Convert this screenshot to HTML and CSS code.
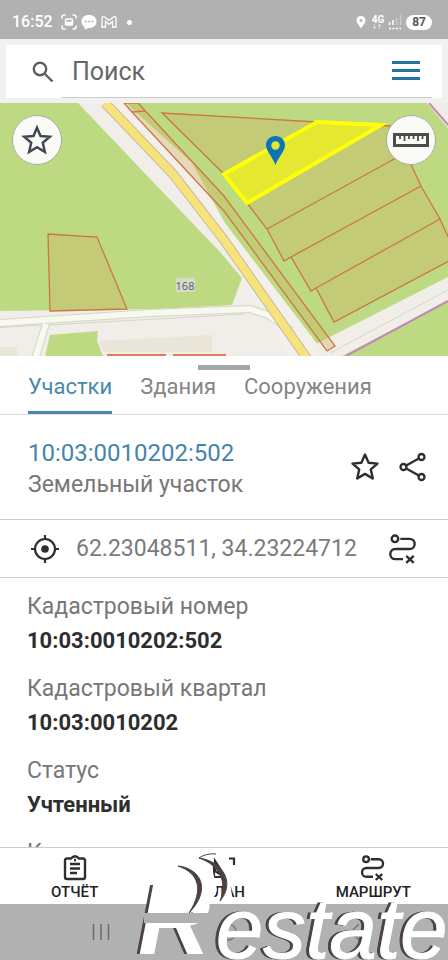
FILE: index.html
```
<!DOCTYPE html>
<html lang="ru">
<head>
  <meta charset="UTF-8" />
  <meta name="viewport" content="width=device-width, initial-scale=1.0"/>
  <title>Земельный участок 10:03:0010202:502</title>
  <link rel="stylesheet" href="styles.css">
</head>
<body>

<div class="status-bar">
  <span class="time">16:52</span>
  <svg width="16" height="16" viewBox="0 0 16 16" fill="none" stroke="#fff" stroke-width="1.5">
    <path d="M1 4.500V3Q1 1 3 1H4.500M11.500 1H13Q15 1 15 3V4.500M15 11.500V13Q15 15 13 15H11.500M4.500 15H3Q1 15 1 13V11.500"/>
    <rect x="4.500" y="5" width="7" height="6" rx="1"/>
    <path d="M5 10L7 8L9 9L11 8V10Z" fill="#fff"/>
  </svg>
  <svg width="16" height="16" viewBox="0 0 16 16">
    <path d="M8 1C12.500 1 15.500 3.500 15.500 7.500S12.500 14 8 14L3.500 15.500V13C1.500 12 .5 10 .5 7.500C.5 3.500 3.500 1 8 1Z" fill="#fff"/>
    <path d="M4 7.500H5.500M7.300 7.500H8.800M10.600 7.500H12.100" stroke="#999" stroke-width="1.500"/>
  </svg>
  <svg width="16" height="16" viewBox="0 0 16 16" fill="none" stroke="#fff" stroke-width="1.300">
    <path d="M1 13V3.500Q2 2 3.500 3L8 6.500L12.500 3Q14 2 15 3.500V13H11.500V7.500L8 10.500L4.500 7.500V13Z"/>
  </svg>
  <span class="dot"></span>
  <div class="status-right">
    <svg width="10" height="14" viewBox="0 0 10 14">
      <path d="M5 1C7.500 1 9.500 2.800 9.500 5.300C9.500 8 7 10.500 5 13.200C3 10.500.5 8 .5 5.300C.5 2.800 2.500 1 5 1Z" fill="#fff"/>
      <circle cx="5" cy="5.500" r="1.500" fill="#b1b1b1"/>
    </svg>
    <span class="network">4G
      <svg width="10" height="5" viewBox="0 0 10 5" stroke="#ddd" fill="none"><path d="M2.500 0V4M1 3L2.500 4.500L4 3M7.500 5V1M6 2L7.500 .5L9 2"/></svg>
    </span>
    <svg width="14" height="15" viewBox="0 0 14 15" stroke-width="1.500">
      <path d="M1.500 7V10M5 5V10" stroke="#fff"/>
      <path d="M8.500 3V10M12.500 0V10" stroke="#ccc"/>
      <path d="M1 13.500H13" stroke="#fff" stroke-dasharray="2 1.500"/>
    </svg>
    <span class="battery">87</span>
  </div>
</div>

<form class="search">
  <label for="query" aria-label="Поиск">
    <svg width="22" height="22" viewBox="0 0 22 22" fill="none" stroke="#5f5f5f" stroke-width="2.400">
      <circle cx="8" cy="8" r="6.200"/>
      <path d="M12.500 12.500L20.500 20.500"/>
    </svg>
  </label>
  <input id="query" type="text" placeholder="Поиск">
  <button class="menu-button" type="button" aria-label="Меню"><span></span><span></span><span></span></button>
</form>

<div class="map">
  <svg class="map-canvas" viewBox="0 103 448 253" preserveAspectRatio="xMidYMid slice">
    <rect y="103" width="448" height="253" fill="#bdda83"/>
    <!-- roads and built-up land -->
    <path d="M78 103H133L225 218L320 343L448 276V301L340 356H0V311L160 309L232 305L242 278L220 252L135 163Z" fill="#f1ede8"/>
    <path d="M126 103L320 356H448V103Z" fill="#bdda83"/>
    <path d="M312 346L448 277V301L342 356H316Z" fill="#f1ede8"/>
    <path d="M106 103H126L192 163L225 223L318 345V356H290L205 215Z" fill="#f3f0ec"/>
    <path d="M0 323L150 313L250 309L268 315L292 331" fill="none" stroke="#d5d6c7" stroke-width="8"/>
    <path d="M0 323L150 313L250 309L268 315L292 331" fill="none" stroke="#f7f8ee" stroke-width="6"/>
    <path d="M46 324L36 356" stroke="#f7f8ee" stroke-width="6"/>
    <path d="M0 327.500L42 325L32 356M49 325L40 356M49 325L245 314" fill="none" stroke="#d6d6c8"/>
    <path d="M50 335L98 331L97 341L103 356H45Z" fill="#bdda83"/>
    <path d="M98 341L212 335V352H104ZM0 347H17V356H0Z" fill="#e9e5d8"/>
    <path d="M107 355H166M173 355H226" stroke="#df7d5d" stroke-width="2"/>
    <path d="M105 103L173 174L224 240L308 360" fill="none" stroke="#c9b99f" stroke-width="10"/>
    <path d="M105 103L173 174L224 240L308 360" fill="none" stroke="#f6e37a" stroke-width="8"/>
    <path d="M427 103H448V128Z" fill="#f2ece8"/>
    <path d="M429 103L450 127M346 356L448 301" stroke="#c18ab8" stroke-width="2"/>
    <path d="M330 353L448 290" stroke="#d5d9c4"/>
    <!-- land parcels -->
    <g fill="#cfae5f" fill-opacity=".35" stroke="#ce7542" stroke-width="1.300">
      <path d="M48 234L97 237L127 309L50 311Z"/>
      <path d="M124 103H138L224 196L335 346L327 351L224 211L132 112Z"/>
      <path d="M132 112L145 111" fill="none"/>
      <path d="M162 113L317 122L390 126L410 162L421 186L440 219L451 243V260L334 322L316 288L311 291L291 257L284 261L267 229L247 203L224 174Z"/>
      <path d="M267 229L396 158M291 257L421 186M316 288L440 219" fill="none"/>
    </g>
    <path d="M317 122L381 125L247 203L224 174Z" fill="#e4e831" stroke="#ffff08" stroke-width="4"/>
    <rect x="176" y="278" width="19" height="14" fill="#d4dcc7"/>
    <text x="185" y="290" class="road-number">168</text>
    <path d="M275.500 136C281 136 285 140 285 145C285 151 279 156 275.500 165C272 156 266 151 266 145C266 140 270 136 275.500 136Z" fill="#0a75b8"/>
    <circle cx="275.500" cy="145.500" r="4.200" fill="#e4e831"/>
  </svg>
  <button class="map-button map-left" aria-label="Избранное">
    <svg width="32" height="32" viewBox="0 0 30 30" fill="none" stroke="#424750" stroke-width="2.300">
      <path d="M15 3.500L18.300 11.300L27 12L20.400 17.600L22.400 26.200L15 21.700L7.600 26.200L9.600 17.600L3 12L11.700 11.300Z"/>
    </svg>
  </button>
  <button class="map-button map-right" aria-label="Линейка">
    <svg width="36" height="16" viewBox="0 0 36 16" fill="none" stroke="#4c4c4c">
      <rect x="1.500" y="2.500" width="33" height="11" stroke-width="3"/>
      <path d="M7 3V7M11.500 3V9M16 3V7M20.500 3V7M25 3V9M29.500 3V7" stroke-width="1.800"/>
    </svg>
  </button>
</div>

<div class="sheet">
  <div class="handle"></div>
  <nav class="tabs">
    <a class="active" href="#parcels">Участки</a>
    <a href="#buildings">Здания</a>
    <a href="#structures">Сооружения</a>
  </nav>

  <div class="heading">
    <div class="heading-text">
      <a href="#object">10:03:0010202:502</a>
      <p>Земельный участок</p>
    </div>
    <button aria-label="В избранное">
      <svg width="30" height="30" viewBox="0 0 30 30" fill="none" stroke="#2e2e2e" stroke-width="2.400" stroke-linejoin="round">
        <path d="M15 2.500L18.600 10.800L27.500 11.600L20.800 17.400L22.800 26.500L15 21.900L7.200 26.500L9.200 17.400L2.500 11.600L11.400 10.800Z"/>
      </svg>
    </button>
    <button aria-label="Поделиться">
      <svg width="30" height="30" viewBox="0 0 30 30" fill="none" stroke="#2e2e2e" stroke-width="2.300">
        <circle cx="5.500" cy="15" r="3"/>
        <circle cx="23.500" cy="5" r="3"/>
        <circle cx="23.500" cy="25" r="3"/>
        <path d="M8.200 13.500L20.800 6.500M8.200 16.500L20.800 23.500"/>
      </svg>
    </button>
  </div>

  <div class="coords">
    <svg width="30" height="30" viewBox="0 0 30 30" fill="none" stroke="#2e2e2e" stroke-width="2.200">
      <circle cx="15" cy="15" r="10"/>
      <circle cx="15" cy="15" r="3.800" fill="#2e2e2e" stroke="none"/>
      <path d="M15 1V6M15 24V29M1 15H6M24 15H29"/>
    </svg>
    <span>62.23048511, 34.23224712</span>
    <button aria-label="Построить маршрут">
      <svg width="30" height="30" viewBox="0 0 26 28" fill="none" stroke="#2e2e2e" stroke-width="2.200">
        <circle cx="5.500" cy="4.500" r="3.100"/>
        <path d="M10.500 4.500H19C25.500 4.500 25.500 14 19 14H6C-.5 14 -.5 23.500 6 23.500H13M16 20.500L23 27M23 20.500L16 27"/>
      </svg>
    </button>
  </div>

  <dl class="details">
    <dt>Кадастровый номер</dt>
    <dd>10:03:0010202:502</dd>
    <dt>Кадастровый квартал</dt>
    <dd>10:03:0010202</dd>
    <dt>Статус</dt>
    <dd>Учтенный</dd>
    <dt>Категория</dt>
  </dl>
</div>

<div class="actions">
  <button>
    <svg width="24" height="26" viewBox="0 0 24 26" fill="none" stroke="#2e2e2e" stroke-width="2.400">
      <path d="M8 3.500H4Q2 3.500 2 5.500V22Q2 24 4 24H20Q22 24 22 22V5.500Q22 3.500 20 3.500H16Q12 -1 8 3.500Z"/>
      <path d="M7 9H17M7 13.500H17M7 18H14M11 5H13"/>
    </svg>
    ОТЧЁТ
  </button>
  <button>
    <svg width="24" height="26" viewBox="0 0 24 26" fill="none" stroke="#2e2e2e" stroke-width="2.200">
      <path d="M17 3.500H22V10M2 9V22H9M3 6V16L9 20V15Z"/>
    </svg>
    ПЛАН
  </button>
  <button>
    <svg width="24" height="26" viewBox="0 0 26 28" fill="none" stroke="#2e2e2e" stroke-width="2.500">
      <circle cx="5.500" cy="4.500" r="3.100"/>
      <path d="M10.500 4.500H19C25.500 4.500 25.500 14 19 14H6C-.5 14 -.5 23.500 6 23.500H13M16 20.500L23 27M23 20.500L16 27"/>
    </svg>
    МАРШРУТ
  </button>
</div>

<div class="system-bar">
  <svg width="18" height="18" viewBox="0 0 18 18" stroke="#6a6a6a" stroke-width="1.500"><path d="M1.500 1V17M9 1V17M16.500 1V17"/></svg>
  <svg width="18" height="18" viewBox="0 0 18 18" stroke="#777" stroke-width="1.500" fill="none"><circle cx="9" cy="9" r="8"/></svg>
  <svg width="18" height="18" viewBox="0 0 18 18" stroke="#777" stroke-width="1.500" fill="none"><path d="M13 1L5 9L13 17"/></svg>
</div>

<!-- agency mark over the lower corner -->
<svg class="watermark" width="316" height="112" viewBox="132 848 316 112">
  <text class="mark-initial" x="138" y="954">R</text>
  <path d="M165 883L180 866L198 857C206 859 212 864 213 872L217 890Q212 907 190 913H154L162 883Z" fill="#fff"/>
  <path d="M224 882H230L233 902H222Z" fill="#fff"/>
  <path d="M178 866C199 868 213 888 189 913C204 890 199 873 178 866Z" fill="#4c4341" stroke="#4c4341"/>
  <path d="M199 858C222 861 236 882 220 901C228 881 219 865 199 858Z" fill="#4c4341" stroke="#4c4341"/>
  <path d="M199 858Q206 853 216 854" fill="none" stroke="#4c4341"/>
  <path d="M144 913H214V923H144Z" fill="#b1b1b1"/>
  <text class="mark-word" x="216" y="958">estate</text>
</svg>

</body>
</html>
```
FILE: styles.css
```
* {
  box-sizing: border-box;
  margin: 0;
  padding: 0;
  font-family: Roboto, sans-serif;
}

body {
  background: #fff;
  display: flex;
  flex-direction: column;
  height: 100vh;
  position: relative;
  overflow: hidden;
}

button {
  background: none;
  border: none;
  cursor: pointer;
}

svg {
  display: block;
  flex: none;
}

.status-bar {
  background: #b1b1b1;
  color: #fff;
  display: flex;
  align-items: center;
  gap: 4px;
  padding: 14px 16px 9px 12px;
  height: 39px;
}

.time {
  font-size: 16px;
  line-height: 16px;
  font-weight: 500;
  margin-right: 4px;
}

.dot {
  width: 5px;
  height: 5px;
  border-radius: 50%;
  background: #fff;
  margin-left: 6px;
}

.status-right {
  margin-left: auto;
  display: flex;
  align-items: center;
  gap: 4px;
}

.network {
  font-size: 10px;
  line-height: 9px;
  font-weight: 700;
  margin-left: 2px;
}

.battery {
  background: #fff;
  color: #555;
  font-size: 12px;
  line-height: 15px;
  font-weight: 700;
  border-radius: 8px;
  padding: 0 6px;
}

.search {
  background: #fff;
  border: 6px solid #f1f1f1;
  border-bottom-width: 5px;
  display: flex;
  align-items: center;
  height: 64px;
  padding: 0 10px 0 26px;
}

.search input {
  flex: 1;
  min-width: 0;
  align-self: stretch;
  border: none;
  border-bottom: 1px solid #ccc;
  background: none;
  color: #666;
  font-size: 25px;
  margin-left: 8px;
  padding-left: 10px;
  outline: none;
}

.search input::placeholder {
  color: #666;
  opacity: 1;
}

.menu-button {
  display: flex;
  flex-direction: column;
  justify-content: center;
  gap: 5px;
  align-self: stretch;
  border-bottom: 1px solid #ccc;
  padding: 0 12px 2px 0;
}

.menu-button span {
  width: 28px;
  height: 3px;
  background: #23749f;
}

.map {
  position: relative;
  height: 253px;
  flex: none;
}

.map-canvas {
  width: 100%;
  height: 100%;
}

.road-number {
  font-family: "Noto Sans", sans-serif;
  font-size: 11px;
  fill: #606779;
  text-anchor: middle;
}

.map-button {
  position: absolute;
  top: 12px;
  width: 50px;
  height: 50px;
  border-radius: 50%;
  border: 1px solid #a8aba0;
  background: #fafbf6;
  display: flex;
  align-items: center;
  justify-content: center;
}

.map-left {
  left: 12px;
}

.map-right {
  right: 12px;
}

.sheet {
  flex: 1;
  min-height: 0;
  display: flex;
  flex-direction: column;
}

.handle {
  width: 52px;
  height: 5px;
  background: #a7a7a7;
  margin: 9px auto 0;
  flex: none;
}

.tabs {
  display: flex;
  gap: 28px;
  padding: 0 28px;
  border-bottom: 1px solid #ddd;
}

.tabs a {
  color: #858585;
  font-size: 22px;
  line-height: 34px;
  padding-bottom: 7px;
  border-bottom: 3px solid transparent;
  text-decoration: none;
}

.tabs a.active {
  color: #4a88ad;
  border-color: #4a88ad;
}

.heading {
  display: flex;
  align-items: center;
  gap: 18px;
  padding: 22px 20px 19px 28px;
  border-bottom: 1px solid #ccc;
}

.heading-text {
  flex: 1;
}

.heading a {
  display: block;
  color: #4584aa;
  font-size: 24px;
  line-height: 32px;
  text-decoration: none;
}

.heading p {
  color: #777;
  font-size: 23px;
  line-height: 31px;
}

.heading button {
  margin-bottom: 4px;
}

.coords {
  display: flex;
  align-items: center;
  gap: 16px;
  padding: 0 30px;
  border-bottom: 1px solid #ccc;
  color: #7b7b7b;
  font-size: 23px;
  line-height: 57px;
}

.coords button {
  margin-left: auto;
}

.details {
  flex: 1;
  min-height: 0;
  overflow: hidden;
  padding: 12px 27px 0;
}

.details dt {
  color: #777;
  font-size: 23px;
  line-height: 34px;
}

.details dd {
  color: #2e2e2e;
  font-size: 22px;
  line-height: 34px;
  font-weight: 700;
  margin-bottom: 14px;
}

.actions {
  display: grid;
  grid-template-columns: 1fr 1fr 1fr;
  border-top: 1px solid #ccc;
  height: 57px;
  flex: none;
}

.actions button {
  display: flex;
  flex-direction: column;
  align-items: center;
  padding-top: 7px;
  color: #222;
  font-size: 15px;
  line-height: 22px;
  font-weight: 500;
}

.system-bar {
  display: grid;
  grid-template-columns: 1fr 1fr 1fr;
  align-items: center;
  justify-items: center;
  background: #b1b1b1;
  height: 56px;
  padding: 0 30px 0 38px;
  flex: none;
}

.watermark {
  position: absolute;
  right: 0;
  bottom: 0;
  pointer-events: none;
}

.watermark text {
  font-family: "Liberation Sans", sans-serif;
  font-style: italic;
  fill: #fff;
  filter: drop-shadow(-3px 0 0 #4c4341);
}

.mark-initial {
  font-size: 100px;
  font-weight: 700;
}

.mark-word {
  font-size: 85px;
  stroke: #fff;
}
```
